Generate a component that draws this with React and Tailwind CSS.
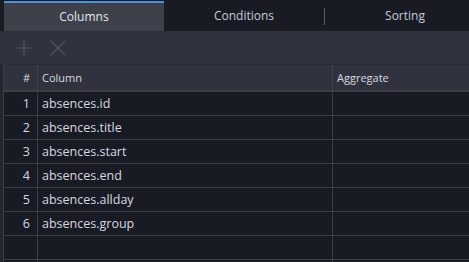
import { Plus, X } from 'lucide-react';

const rows = ['absences.id', 'absences.title', 'absences.start', 'absences.end', 'absences.allday', 'absences.group', '', ''];

export default function App() {
  return (
    <div className="w-[469px] h-[262px] overflow-hidden bg-[#181a24] text-[#d7d9e0]" style={{ fontFamily: '"Open Sans", "Noto Sans", sans-serif' }}>
      {/* tabs */}
      <div className="flex h-[31px] bg-[#181a24] pt-px">
        <div className="w-1 shrink-0" />
        <div className="w-[160px] shrink-0 flex items-center justify-center bg-[#3e404b] border-t-2 border-[#4a8fe0] text-[12px] text-[#e4e6ec]">Columns</div>
        <div className="w-[160px] shrink-0 flex items-center justify-center text-[12px] text-[#c9ccd6]">Conditions</div>
        <div className="w-px h-[17px] shrink-0 self-center bg-[#5a5d69]" />
        <div className="w-[160px] shrink-0 flex items-center justify-center text-[12px] text-[#c9ccd6]">Sorting</div>
      </div>
      {/* toolbar */}
      <div className="flex items-center h-[33px] bg-[#30323d] pl-[12px] gap-[9px]">
        <Plus size={24} strokeWidth={1.7} className="text-[#4c4f5a]" />
        <X size={26} strokeWidth={1.6} className="text-[#4c4f5a]" />
      </div>
      {/* table */}
      <div className="flex">
        <div className="w-[3px] shrink-0 bg-[#23252f]" />
        <div className="flex-1 border-l border-[#3c3f4a]">
          <div className="flex h-[28px] bg-[#30323d] border-t border-[#262832] border-b-2 border-b-[#3c3f4a] text-[11px] text-[#d7d9e0]">
            <div className="w-[34px] border-r border-[#40434e] flex items-center justify-end pr-[7px] pt-[2px]">#</div>
            <div className="w-[295px] border-r border-[#40434e] flex items-center pl-[4px] pt-[2px]">Column</div>
            <div className="flex-1 flex items-center pl-[4px] pt-[2px]">Aggregate</div>
          </div>
          {rows.map((r, i) => (
            <div key={i} className="flex h-[24px] border-b border-[#3a3c47] text-[12.5px]">
              <div className="w-[34px] border-r border-[#3a3c47] flex items-center justify-end pr-[7px] pt-[2px] text-[#d7d9e0]">{r ? i + 1 : ''}</div>
              <div className="w-[295px] border-r border-[#3a3c47] flex items-center pl-[4px] pt-[2px] text-[#d7d9e0]">{r}</div>
              <div className="flex-1" />
            </div>
          ))}
        </div>
      </div>
    </div>
  );
}
